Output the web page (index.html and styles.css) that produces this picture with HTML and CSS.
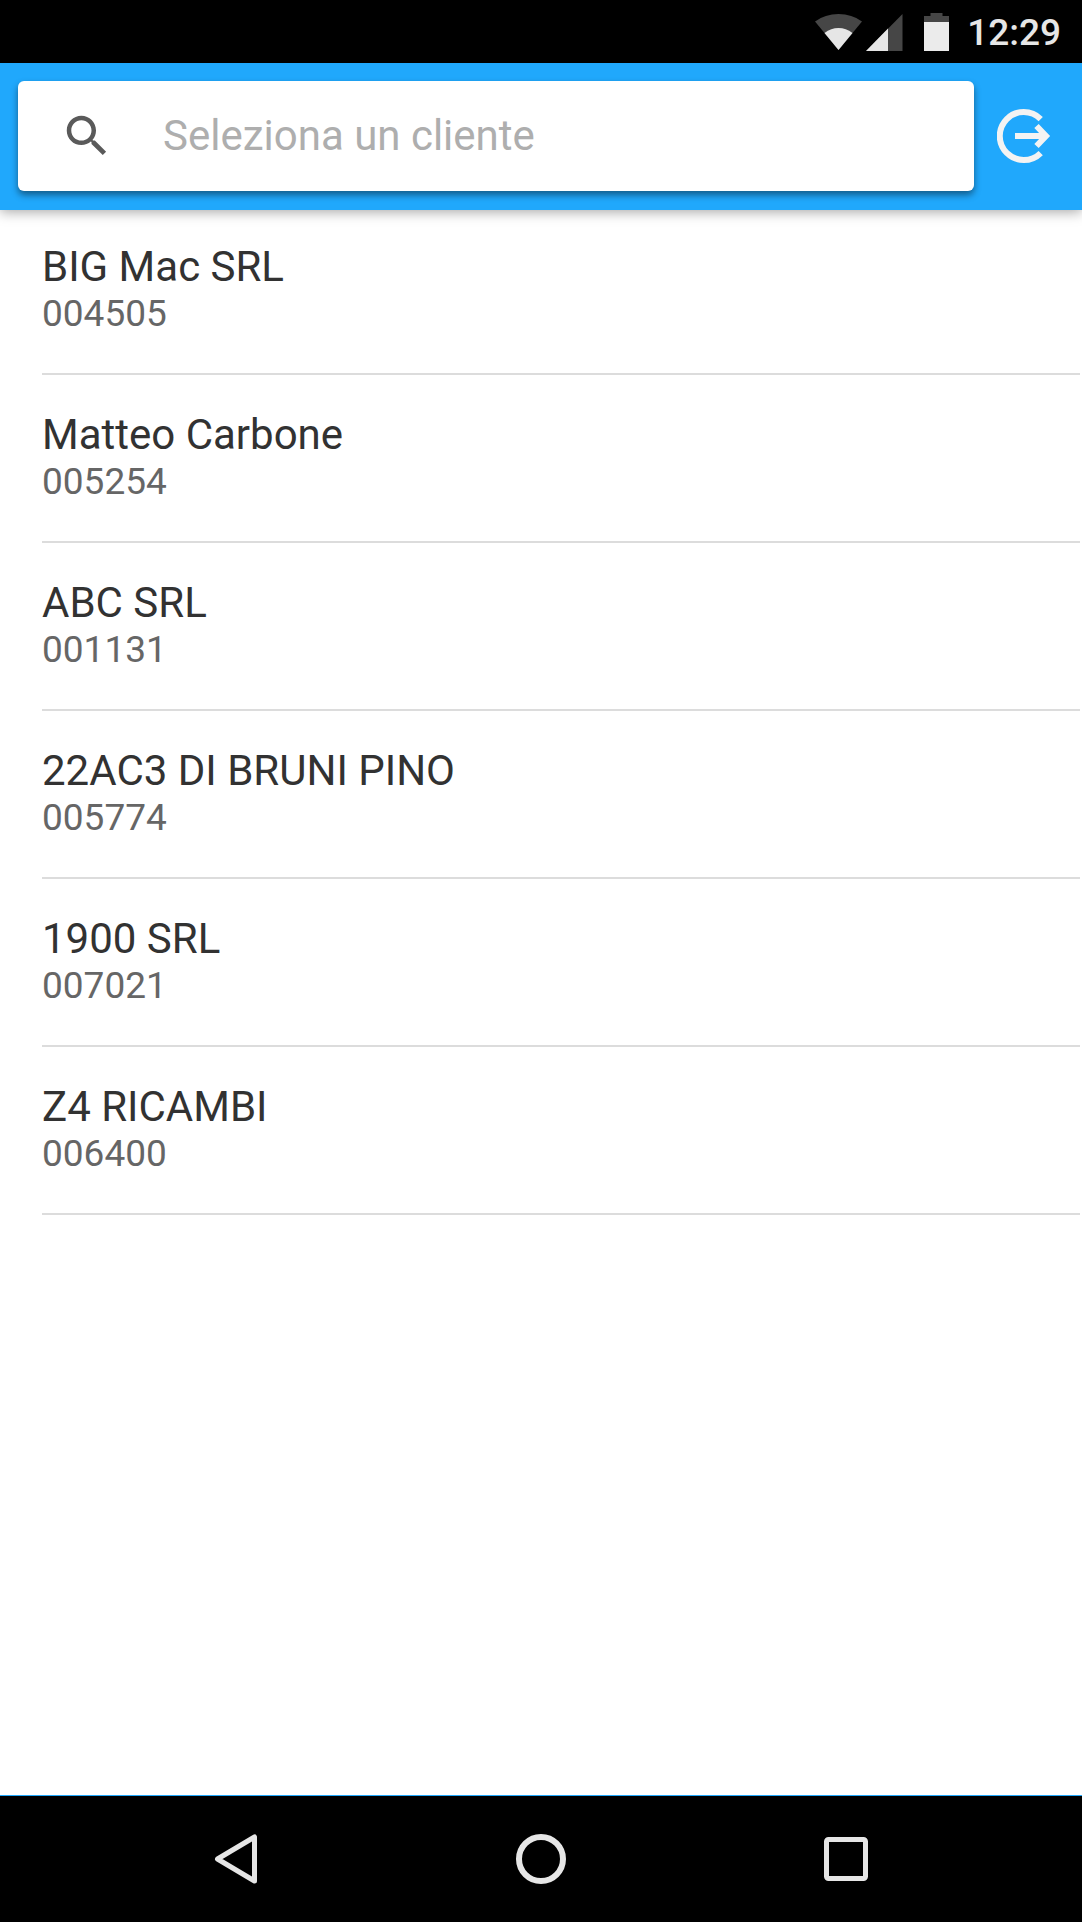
FILE: index.html
```
<!DOCTYPE html>
<html lang="it">
<head>
<meta charset="UTF-8">
<meta name="viewport" content="width=device-width, initial-scale=1.0">
<title>Clienti</title>
<link rel="stylesheet" href="styles.css">
</head>
<body>
    <div class="status-bar">
        <svg class="wifi" width="47" height="38" viewBox="0 0 47 38" aria-hidden="true">
            <path d="M23.500 37 L0 8.500 Q10 1 23.500 1 T47 8.500 Z" fill="#464646"/>
            <path d="M23.500 37 L9.500 20 Q16 15 23.500 15 T37.500 20 Z" fill="#e6e6e6"/>
        </svg>
        <svg class="signal" width="37" height="38" viewBox="0 0 37 38" aria-hidden="true">
            <path d="M36.500 1 V38 H0 Z" fill="#464646"/>
            <path d="M22 15.500 V38 H0 Z" fill="#e6e6e6"/>
        </svg>
        <svg class="battery" width="25" height="38" viewBox="0 0 25 38" aria-hidden="true">
            <path d="M6.500 0 H18.500 V3 H25 V10 H0 V3 H6.500 Z" fill="#464646"/>
            <path d="M0 9 H25 V38 H0 Z" fill="#ebebeb"/>
        </svg>
        <time class="clock">12:29</time>
    </div>

    <header class="toolbar">
        <label class="search">
            <svg width="54" height="54" viewBox="0 0 24 24" aria-hidden="true">
                <path fill="#5a5a5a" d="M15.500 14h-.79l-.28-.27C15.410 12.590 16 11.110 16 9.500 16 5.910 13.090 3 9.500 3S3 5.910 3 9.500 5.910 16 9.500 16c1.610 0 3.090-.59 4.230-1.570l.27.28v.79l5 4.990L20.490 19l-4.990-5zm-6 0C7.010 14 5 11.990 5 9.500S7.010 5 9.500 5 14 7.010 14 9.500 11.990 14 9.500 14z"/>
            </svg>
            <input type="text" placeholder="Seleziona un cliente" aria-label="Seleziona un cliente">
        </label>
        <button class="logout" type="button" aria-label="Esci">
            <svg width="54" height="54" viewBox="0 0 54 54" fill="none" stroke="#f3f3f3" stroke-width="6">
                <path d="M43.700 10 A24 24 0 1 0 43.700 44"/>
                <path d="M18 27 H48"/>
                <path d="M39.500 17 L49 27 L39.500 37"/>
            </svg>
        </button>
    </header>

    <main>
        <ul class="clients">
            <li>
                <div class="name">BIG Mac SRL</div>
                <div class="code">004505</div>
            </li>
            <li>
                <div class="name">Matteo Carbone</div>
                <div class="code">005254</div>
            </li>
            <li>
                <div class="name">ABC SRL</div>
                <div class="code">001131</div>
            </li>
            <li>
                <div class="name">22AC3 DI BRUNI PINO</div>
                <div class="code">005774</div>
            </li>
            <li>
                <div class="name">1900 SRL</div>
                <div class="code">007021</div>
            </li>
            <li>
                <div class="name">Z4 RICAMBI</div>
                <div class="code">006400</div>
            </li>
        </ul>
    </main>

    <nav class="nav-bar">
        <button type="button" aria-label="Indietro">
            <svg width="60" height="60" viewBox="0 0 60 60">
                <path d="M48.500 8 V52 L11.500 30 Z" stroke-width="5"/>
            </svg>
        </button>
        <button type="button" aria-label="Home">
            <svg width="60" height="60" viewBox="0 0 60 60">
                <circle cx="30" cy="30" r="22" stroke-width="6"/>
            </svg>
        </button>
        <button type="button" aria-label="Recenti">
            <svg width="60" height="60" viewBox="0 0 60 60">
                <rect x="10.500" y="10.500" width="39" height="39" rx="2" stroke-width="5"/>
            </svg>
        </button>
    </nav>
</body>
</html>
```
FILE: styles.css
```
* {
    box-sizing: border-box;
}

body {
    display: flex;
    flex-direction: column;
    min-height: 100vh;
    margin: 0;
    background-color: #fff;
    font-family: Roboto, sans-serif;
}

svg {
    display: block;
    flex: none;
}

button {
    padding: 0;
    border: 0;
    background: none;
    cursor: pointer;
}

/* STATUS BAR */
.status-bar {
    display: flex;
    align-items: center;
    justify-content: flex-end;
    height: 63px;
    padding-right: 21px;
    background-color: #000;
}

.signal {
    margin-left: 4px;
}

.battery {
    margin: 0 18px 0 21px;
}

.clock {
    padding-top: 2px;
    color: #e6e6e6;
    font-size: 37px;
    font-weight: 500;
    line-height: 42px;
}

/* TOOLBAR */
.toolbar {
    display: flex;
    align-items: center;
    padding: 18px 31px 19px 18px;
    background-color: #20a8fc;
    box-shadow: 0 2px 12px rgba(0, 0, 0, 0.35);
}

.search {
    display: flex;
    flex: 1;
    align-items: center;
    gap: 49px;
    height: 110px;
    min-width: 0;
    padding: 0 42px;
    border-radius: 6px;
    background-color: #fff;
    box-shadow: 0 4px 7px rgba(0, 0, 0, 0.45);
}

.search input {
    flex: 1;
    min-width: 0;
    padding: 0;
    border: 0;
    outline: none;
    background: none;
    color: #323232;
    font-family: inherit;
    font-size: 42px;
    line-height: 48px;
}

.search input::placeholder {
    color: #aeaeae;
    opacity: 1;
}

.logout {
    margin-left: 23px;
}

/* CLIENT LIST */
main {
    flex: 1;
}

.clients {
    margin: 0 2px 0 42px;
    padding: 0;
    list-style: none;
}

.clients li {
    padding: 36px 0;
    border-bottom: 2px solid #dcdcdc;
}

.clients li:first-child {
    padding-top: 33px;
}

.name {
    color: #323232;
    font-size: 42px;
    line-height: 48px;
}

.code {
    color: #666;
    font-size: 37px;
    line-height: 46px;
}

/* NAVIGATION BAR */
.nav-bar {
    display: flex;
    justify-content: center;
    height: 127px;
    border-top: 1px solid #20a8fc;
    background-color: #000;
}

.nav-bar button {
    display: flex;
    align-items: center;
    justify-content: center;
    width: 305px;
}

.nav-bar svg {
    fill: none;
    stroke: #e6e6e6;
    stroke-linejoin: round;
}
```
